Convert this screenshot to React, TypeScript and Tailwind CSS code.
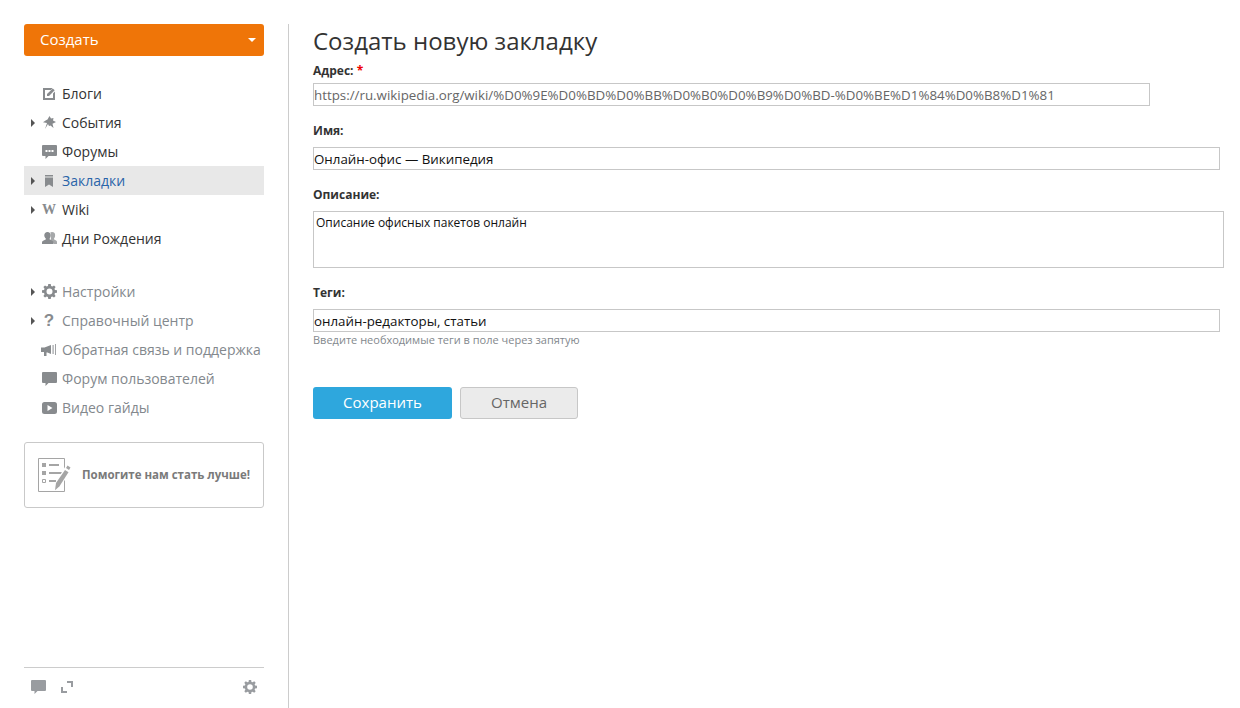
import React from 'react';

const Gear = ({ className = '' }: { className?: string }) => (
  <svg viewBox="0 0 16 16" className={className}>
    <path
      fill="currentColor"
      fillRule="evenodd"
      d="M6.700 0h2.600l.4 2.200 1.300.5 1.800-1.200 1.700 1.700-1.200 1.800.5 1.300 2.200.4v2.600l-2.200.4-.5 1.300 1.200 1.800-1.700 1.700-1.800-1.200-1.300.5-.4 2.200H6.700l-.4-2.200-1.300-.5-1.800 1.200-1.700-1.700 1.200-1.800-.5-1.300L0 9.300V6.700l2.200-.4.5-1.300-1.200-1.800 1.700-1.700 1.800 1.200 1.300-.5zM8 4.800a3.200 3.200 0 1 0 0 6.400 3.200 3.200 0 0 0 0-6.400z"
    />
  </svg>
);

const Bubble = ({ className = '', dots = false }: { className?: string; dots?: boolean }) => (
  <svg viewBox="0 0 15 14" className={className}>
    <path fill="currentColor" d="M1 0h13a1 1 0 0 1 1 1v9a1 1 0 0 1-1 1H6.500L3.500 14v-3H1a1 1 0 0 1-1-1V1a1 1 0 0 1 1-1z" />
    {dots && <path fill="#fff" d="M3.500 5h2v2h-2zM6.500 5h2v2h-2zM9.500 5h2v2h-2z" />}
  </svg>
);

const icons: Record<string, React.ReactNode> = {
  blogs: (
    <svg viewBox="0 0 12 12" className="h-3 w-3">
      <path fill="currentColor" d="M0 0h9.500L8 2H2v8h8V5.500L12 3.500V12H0z" />
      <path fill="currentColor" d="M4 6 9.800.4 11.700 2.200 6 8H4z" />
    </svg>
  ),
  events: (
    <svg viewBox="0 0 13 13" className="h-[13px] w-[13px]">
      <path fill="currentColor" d="M6.500 0 8 2.500 10.500 2 10 4.500 13 6 9.500 7.800 10.500 12 7.500 9.500 6 10 5 8 2 13 4 7 0 6.200 3 4.200 4.500 3.500z" />
    </svg>
  ),
  forums: <Bubble dots className="h-[14px] w-[15px]" />,
  bookmarks: (
    <svg viewBox="0 0 10 12" className="h-3 w-[10px]">
      <path fill="currentColor" d="M1 0h8v1.500H1zM1 2.500h8V12L5 9.500 1 12z" />
    </svg>
  ),
  wiki: <span className="font-['Liberation_Serif',serif] text-[14px] font-bold leading-none">W</span>,
  birthdays: (
    <svg viewBox="0 0 15 13" className="h-[13px] w-[15px]">
      <path fill="currentColor" opacity=".75" d="M10 0a3.200 3.200 0 0 1 3.100 3.500c0 1.400-.5 2.500-1.200 3.200.1.700.5 1 1.100 1.200 1 .4 2 .9 2 2.100V12h-3.200c-.2-1.500-1.200-2.300-2.800-3l-.4-1.500C9.200 6.500 9 5.200 9 3.800 9 2.300 8.700 1 8.200.5 8.700.2 9.300 0 10 0z" />
      <path fill="currentColor" d="M5.500 0a3.200 3.200 0 0 1 3.200 3.500c0 1.400-.5 2.500-1.200 3.300.1.700.6 1 1.300 1.200C10.300 8.500 11.500 9 11.500 10.500V12H0v-1.500C0 9 1.200 8.500 2.700 8c.7-.2 1.200-.5 1.300-1.200-.8-.8-1.700-2-1.700-3.300A3.200 3.200 0 0 1 5.500 0z" />
    </svg>
  ),
  settings: <Gear className="h-[15px] w-[15px]" />,
  help: <span className="font-['Liberation_Sans',sans-serif] text-[17px] font-bold leading-none">?</span>,
  feedback: (
    <svg viewBox="0 0 16 12" className="h-3 w-4">
      <path fill="currentColor" d="M0 3.500h3.500L10 1v9L6.500 8.500H5.500V12H3V8H0z" />
      <path fill="currentColor" opacity=".8" d="M11.500 1h1.200v9h-1.200zM14 0h1v11h-1z" />
    </svg>
  ),
  userForum: <Bubble className="h-[14px] w-[15px]" />,
  video: (
    <svg viewBox="0 0 15 12" className="h-3 w-[15px]">
      <path fill="currentColor" fillRule="evenodd" d="M2.500 0h10A2.500 2.500 0 0 1 15 2.500v7a2.500 2.500 0 0 1-2.500 2.500h-10A2.500 2.500 0 0 1 0 9.500v-7A2.500 2.500 0 0 1 2.500 0zM5.500 3v6l5-3z" />
    </svg>
  ),
};

const topItems = [
  { key: 'blogs', label: 'Блоги' },
  { key: 'events', label: 'События', arrow: true },
  { key: 'forums', label: 'Форумы' },
  { key: 'bookmarks', label: 'Закладки', arrow: true, active: true },
  { key: 'wiki', label: 'Wiki', arrow: true },
  { key: 'birthdays', label: 'Дни Рождения' },
];

const helpItems = [
  { key: 'settings', label: 'Настройки', arrow: true },
  { key: 'help', label: 'Справочный центр', arrow: true },
  { key: 'feedback', label: 'Обратная связь и поддержка' },
  { key: 'userForum', label: 'Форум пользователей' },
  { key: 'video', label: 'Видео гайды' },
];

type Item = { key: string; label: string; arrow?: boolean; active?: boolean };

const NavRow = ({ item, muted }: { item: Item; muted?: boolean }) => (
  <div className={`flex h-[29px] items-center whitespace-nowrap ${item.active ? 'bg-[#e8e8e8]' : ''}`}>
    <span className="flex w-[15px] justify-end pr-[4px]">
      {item.arrow && (
        <span className="h-0 w-0 border-y-[4px] border-l-[4px] border-y-transparent border-l-[#555]" />
      )}
    </span>
    <span className="flex w-5 justify-center text-[#888b8e]">{icons[item.key]}</span>
    <span
      className={`ml-[3px] text-[14px] ${
        item.active ? 'text-[#2a64a8]' : muted ? 'text-[#83888d]' : 'text-[#333]'
      }`}
    >
      {item.label}
    </span>
  </div>
);

const Field = ({
  label,
  required,
  value,
  width,
  muted,
  gap,
}: {
  label: string;
  required?: boolean;
  value: string;
  width: string;
  muted?: boolean;
  gap: string;
}) => (
  <div>
    <div className="h-[18px] text-[12px] font-bold leading-[18px] text-[#333]">
      {label} {required && <span className="text-[#e00]">*</span>}
    </div>
    <input
      readOnly
      value={value}
      className={`block h-[23px] border border-[#c7c7c7] pl-0 text-[13.330px] outline-none ${gap} ${width} ${
        muted ? 'text-[#666]' : 'text-[#111]'
      }`}
    />
  </div>
);

export default function App() {
  return (
    <div className="flex h-[708px] w-[1240px] overflow-hidden bg-white pl-6 pt-6 font-['Open_Sans',sans-serif]">
      <aside className="mr-6 flex w-[240px] shrink-0 flex-col">
        <button className="flex h-8 shrink-0 items-center justify-between rounded-[3px] bg-[#ef7508] pb-px pl-4 pr-[8px] text-[15px] text-white">
          <span>Создать</span>
          <span className="h-0 w-0 border-x-[4px] border-t-[4px] border-x-transparent border-t-white" />
        </button>

        <nav className="mt-[23px]">
          {topItems.map((item) => (
            <NavRow key={item.key} item={item} />
          ))}
        </nav>

        <nav className="mt-[24px]">
          {helpItems.map((item) => (
            <NavRow key={item.key} item={item} muted />
          ))}
        </nav>

        <div className="mt-[20px] flex h-[66px] items-center rounded-[3px] border border-[#c9c9c9] pl-[13px]">
          <svg viewBox="0 0 33 34" className="h-[34px] w-[33px] shrink-0 text-[#a5a5a5]">
            <path fill="none" stroke="currentColor" d="M.5.500h26v33H.5z" />
            <path fill="currentColor" d="M4 5h4v4H4zM4 13h4v4H4z" />
            <path fill="none" stroke="currentColor" d="M4.500 21.500h3v3h-3z" />
            <path fill="currentColor" d="M11 6h10v2H11zM11 14h13v2H11zM11 22h7v2h-7z" />
            <path fill="#fff" d="M16 27 27 9l6 3-11 18-7 3z" />
            <path fill="currentColor" d="M18 25 27 12l3.500 2.200-9 14-4.500 4z" />
            <path fill="currentColor" d="M28 10l1.500-2.500 3 2L31 12z" />
          </svg>
          <span className="ml-[11px] whitespace-nowrap text-[11.500px] font-bold text-[#7a7a7a]">Помогите нам стать лучше!</span>
        </div>

        <div className="mt-auto mb-[7px] flex h-[34px] shrink-0 items-center border-t border-[#ccc] pl-[7px] pr-[7px] pt-[4px] text-[#999ca0]">
          <Bubble className="h-[14px] w-[15px]" />
          <svg viewBox="0 0 12 12" className="ml-[15px] h-3 w-3">
            <path fill="none" stroke="currentColor" strokeWidth="2" d="M1 6v5h5M6 1h5v5" />
          </svg>
          <Gear className="ml-auto h-[14px] w-[14px]" />
        </div>
      </aside>

      <main className="flex-1 border-l border-[#ccc] pl-6">
        <h1 className="h-[38px] text-[24px] font-normal leading-[34px] text-[#333]">Создать новую закладку</h1>
        <Field label="Адрес:" required muted gap="mt-[3px]" width="w-[837px]" value="https://ru.wikipedia.org/wiki/%D0%9E%D0%BD%D0%BB%D0%B0%D0%B9%D0%BD-%D0%BE%D1%84%D0%B8%D1%81" />
        <div className="mt-4">
          <Field label="Имя:" gap="mt-[7px]" width="w-[907px]" value="Онлайн-офис — Википедия" />
        </div>
        <div className="mt-4">
          <div className="h-[18px] text-[12px] font-bold leading-[18px] text-[#333]">Описание:</div>
          <textarea
            readOnly
            value="Описание офисных пакетов онлайн"
            className="mt-[7px] block h-[57px] w-[911px] resize-none border border-[#c7c7c7] px-[2px] py-0 text-[12px] leading-[22px] text-[#111] outline-none"
          />
        </div>
        <div className="mt-4">
          <Field label="Теги:" gap="mt-[7px]" width="w-[907px]" value="онлайн-редакторы, статьи" />
        </div>
        <p className="text-[11px] leading-[15px] text-[#83888d]">Введите необходимые теги в поле через запятую</p>
        <div className="mt-[40px] flex gap-2">
          <button className="h-8 w-[139px] rounded-[3px] bg-[#2ea7dd] pb-[2px] text-[15px] text-white">Сохранить</button>
          <button className="h-8 w-[118px] rounded-[3px] border border-[#c7c7c7] bg-[#ebebeb] pb-[2px] text-[15px] text-[#666]">Отмена</button>
        </div>
      </main>
    </div>
  );
}
